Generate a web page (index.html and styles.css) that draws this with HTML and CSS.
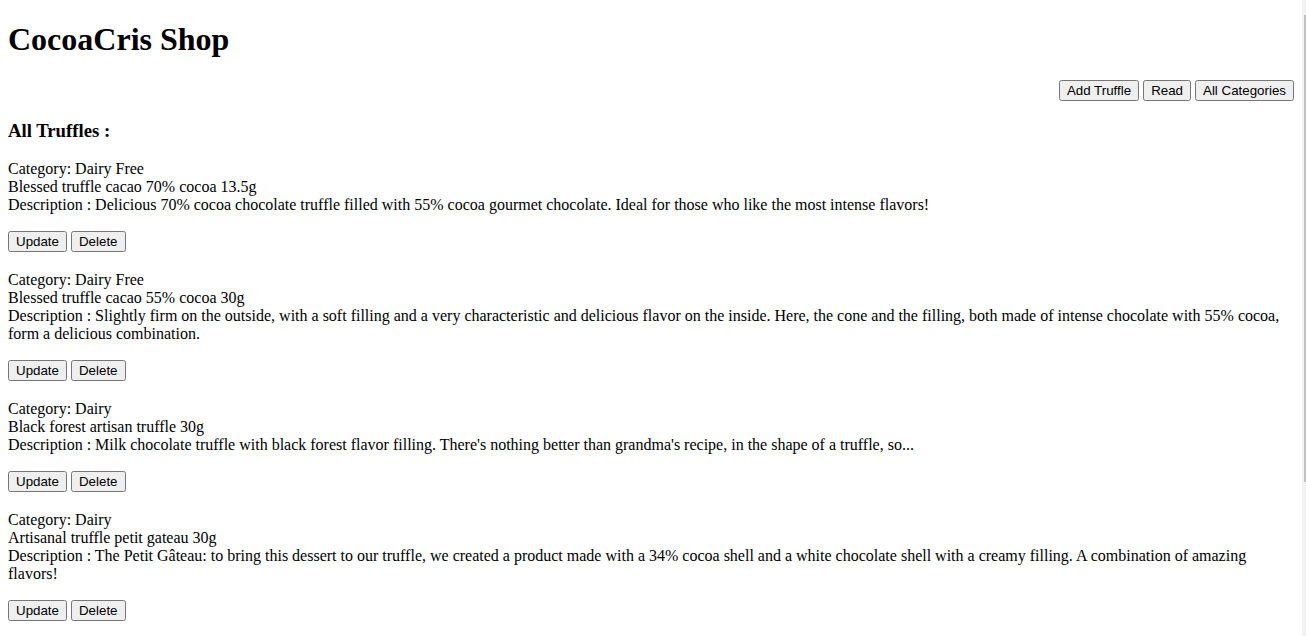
FILE: index.html
```html
<!DOCTYPE html>
<html lang="en">
<head>
<meta charset="utf-8">
<title>CocoaCris Shop</title>
<link rel="stylesheet" href="styles.css">
</head>
<body class="page">
  <h1 class="title">CocoaCris Shop</h1>
  <div class="nav">
    <button class="btn">Add Truffle</button>
    <button class="btn">Read</button>
    <button class="btn">All Categories</button>
  </div>
  <h3 class="section-title">All Truffles :</h3>
  <div class="list">
    <div class="item">
      <p class="info">Category: Dairy Free<br>Blessed truffle cacao 70% cocoa 13.5g<br>Description : Delicious 70% cocoa chocolate truffle filled with 55% cocoa gourmet chocolate. Ideal for those who like the most intense flavors!</p>
      <p class="actions"><button class="btn">Update</button> <button class="btn">Delete</button></p>
    </div>
    <div class="item">
      <p class="info">Category: Dairy Free<br>Blessed truffle cacao 55% cocoa 30g<br>Description : Slightly firm on the outside, with a soft filling and a very characteristic and delicious flavor on the inside. Here, the cone and the filling, both made of intense chocolate with 55% cocoa, form a delicious combination.</p>
      <p class="actions"><button class="btn">Update</button> <button class="btn">Delete</button></p>
    </div>
    <div class="item">
      <p class="info">Category: Dairy<br>Black forest artisan truffle 30g<br>Description : Milk chocolate truffle with black forest flavor filling. There's nothing better than grandma's recipe, in the shape of a truffle, so...</p>
      <p class="actions"><button class="btn">Update</button> <button class="btn">Delete</button></p>
    </div>
    <div class="item">
      <p class="info">Category: Dairy<br>Artisanal truffle petit gateau 30g<br>Description : The Petit Gâteau: to bring this dessert to our truffle, we created a product made with a 34% cocoa shell and a white chocolate shell with a creamy filling. A combination of amazing flavors!</p>
      <p class="actions"><button class="btn">Update</button> <button class="btn">Delete</button></p>
    </div>
    <div class="item">
      <p class="info">Category: Dairy<br>Brigadeiro truffle 30g<br>Description : Milk chocolate truffle with traditional brigadeiro filling, the most loved Brazilian sweet, now in the shape of a truffle to make your day even more special and delicious.</p>
      <p class="actions"><button class="btn">Update</button> <button class="btn">Delete</button></p>
    </div>
  </div>
  <div class="scrollbar"><div class="scrollbar-thumb"></div></div>
</body>
</html>
```
FILE: styles.css
```css
html {
  background: #ffffff;
}
html::-webkit-scrollbar {
  display: none;
}
.page {
  margin: 0;
  padding: 0 12px 8px 8px;
  font-family: "Liberation Serif", "Times New Roman", serif;
  font-size: 16px;
  color: #000000;
}
.title {
  font-size: 32px;
  font-weight: bold;
  margin: 21.44px 0;
}
.nav {
  text-align: right;
}
.section-title {
  font-size: 18.72px;
  font-weight: bold;
  margin: 18.72px 0;
}
.info {
  margin: 16px 0;
}
.actions {
  margin: 16px 0;
  padding: 1px 0 3px;
}
.btn {
  font-family: "Liberation Sans", Arial, sans-serif;
  font-size: 13.333px;
  color: #000000;
}
.scrollbar {
  position: fixed;
  top: 0;
  right: 0;
  width: 4px;
  height: 100vh;
  background: #f1f1f1;
}
.scrollbar-thumb {
  position: absolute;
  top: 15px;
  right: 0;
  width: 2px;
  height: 467px;
  background: #c1c1c1;
}
```
